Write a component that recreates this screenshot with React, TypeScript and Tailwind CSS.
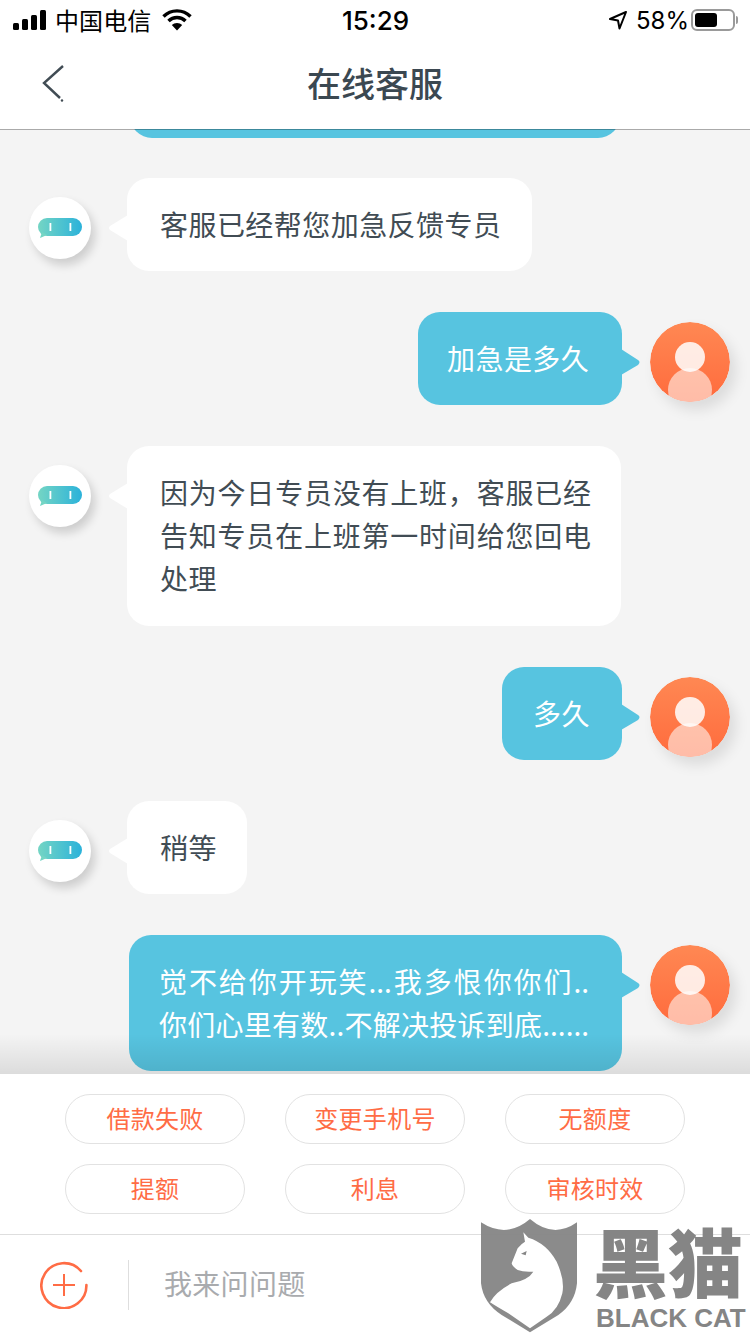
import React from 'react';

const BubbleTail: React.FC<{ side: 'left' | 'right' }> = ({ side }) =>
  side === 'left' ? (
    <svg className="absolute left-[-19px] top-[36px]" width="20" height="28" viewBox="0 0 20 28">
      <path d="M20 1 L2 12 Q0 14 2 16 L20 27 Z" fill="#ffffff" />
    </svg>
  ) : (
    <svg className="absolute right-[-19px] top-[36px]" width="20" height="28" viewBox="0 0 20 28">
      <path d="M0 1 L17 12 Q20 14 17 17 L0 27 Z" fill="#57c4e0" />
    </svg>
  );

const BotAvatar: React.FC = () => (
  <div className="mt-[19px] flex h-[62px] w-[62px] shrink-0 items-center justify-center rounded-full bg-white shadow-[4px_6px_10px_rgba(0,0,0,0.16)]">
    <svg width="44" height="24" viewBox="0 0 44 24">
      <defs>
        <linearGradient id="botGrad" x1="0" y1="0" x2="1" y2="0">
          <stop offset="0" stopColor="#74d5c4" />
          <stop offset="1" stopColor="#2bb2da" />
        </linearGradient>
      </defs>
      <rect x="0" y="2" width="44" height="18" rx="9" fill="url(#botGrad)" />
      <path d="M2 22 L4 16 L9 19 Z" fill="#74d5c4" />
      <rect x="11.5" y="7" width="1.8" height="8" fill="#ffffff" />
      <rect x="31.5" y="7" width="1.8" height="8" fill="#ffffff" />
    </svg>
  </div>
);

const UserAvatar: React.FC = () => (
  <svg className="mt-[10px] shrink-0 rounded-full shadow-[6px_8px_14px_rgba(0,0,0,0.1)]" width="80" height="80" viewBox="0 0 80 80">
    <defs>
      <linearGradient id="userGrad" x1="0" y1="0" x2="0" y2="1">
        <stop offset="0" stopColor="#ff8853" />
        <stop offset="1" stopColor="#ff6b3d" />
      </linearGradient>
      <clipPath id="userClip">
        <circle cx="40" cy="40" r="40" />
      </clipPath>
    </defs>
    <circle cx="40" cy="40" r="40" fill="url(#userGrad)" />
    <g clipPath="url(#userClip)">
      <circle cx="40" cy="35" r="15" fill="#ffffff" fillOpacity="0.85" />
      <ellipse cx="40" cy="68" rx="22" ry="22" fill="#ffffff" fillOpacity="0.55" />
    </g>
  </svg>
);

// long lines in a multi-line bubble are justified to the bubble width, like the app does
const BubbleLines: React.FC<{ lines: string[] }> = ({ lines }) => (
  <>
    {lines.map((l) =>
      lines.length > 1 && l.length >= 10 ? (
        <div key={l} className="text-justify [text-align-last:justify]">
          {l}
        </div>
      ) : (
        <div key={l} className="whitespace-nowrap tracking-[0.45px]">
          {l}
        </div>
      ),
    )}
  </>
);

const BotMessage: React.FC<{ lines: string[]; className: string }> = ({ lines, className }) => (
  <div className="flex items-start gap-[36px] pl-[29px]">
    <BotAvatar />
    <div className={`relative rounded-[22px] bg-white pl-[33px] pr-[30px] pt-[25px] text-[28px] leading-[43px] text-[#414c54] ${className}`}>
      <BubbleTail side="left" />
      <BubbleLines lines={lines} />
    </div>
  </div>
);

const UserMessage: React.FC<{ lines: string[]; className: string }> = ({ lines, className }) => (
  <div className="flex items-start justify-end gap-[28px] pr-[20px]">
    <div className={`relative rounded-[22px] bg-[#57c4e0] py-[25px] text-[28px] leading-[43px] text-white ${className}`}>
      <BubbleTail side="right" />
      <BubbleLines lines={lines} />
    </div>
    <UserAvatar />
  </div>
);

const topics = ['借款失败', '变更手机号', '无额度', '提额', '利息', '审核时效'];

const App: React.FC = () => {
  return (
    <div className="relative flex h-[1334px] w-[750px] flex-col overflow-hidden bg-white font-['Noto_Sans_CJK_SC',sans-serif]">
      {/* Status bar */}
      <div className="flex h-[40px] items-center justify-between pl-[13px] pr-[12px] text-black">
        <div className="flex w-[260px] items-center">
          <svg width="34" height="20" viewBox="0 0 34 20">
            <rect x="0" y="13" width="6" height="7" rx="1.5" fill="#000" />
            <rect x="9" y="9" width="6" height="11" rx="1.5" fill="#000" />
            <rect x="18" y="5" width="6" height="15" rx="1.5" fill="#000" />
            <rect x="27" y="0" width="6" height="20" rx="1.5" fill="#000" />
          </svg>
          <span className="ml-[8px] text-[24px] leading-[30px] tracking-[0.1px]">中国电信</span>
          <svg className="ml-[11px]" width="30" height="22" viewBox="0 0 30 22">
            <path d="M1.5 7.5 A19 19 0 0 1 28.5 7.5" fill="none" stroke="#000" strokeWidth="3.4" />
            <path d="M6.5 12 A12 12 0 0 1 23.5 12" fill="none" stroke="#000" strokeWidth="3.4" />
            <path d="M15 21.5 L9.8 16 A7.5 7.5 0 0 1 20.2 16 Z" fill="#000" />
          </svg>
        </div>
        <span className="pt-[1px] font-['Inter',sans-serif] text-[26px] font-medium leading-[30px]">15:29</span>
        <div className="flex w-[260px] items-center justify-end">
          <svg width="20" height="20" viewBox="0 0 20 20">
            <path d="M18 2 L2 9 L10 10.5 L11.5 18.5 Z" fill="none" stroke="#000" strokeWidth="2" strokeLinejoin="round" />
          </svg>
          <span className="ml-[8px] pt-[2px] font-['Inter',sans-serif] text-[24px] leading-[30px]">58%</span>
          <div className="ml-[2px] flex h-[22px] w-[44px] items-center rounded-[6px] border-2 border-[#9a9a9a] p-[2px]">
            <div className="h-full w-[22px] rounded-[3px] bg-black" />
          </div>
          <div className="ml-[1px] h-[8px] w-[2px] rounded-r-full bg-[#9a9a9a]" />
        </div>
      </div>

      {/* Nav: the border is see-through, the top bubble scrolls under it */}
      <div className="relative z-10 mb-[-1px] flex h-[90px] shrink-0 items-center justify-center border-b border-black/30 bg-white bg-clip-padding pb-[3px]">
        <svg className="absolute left-[40px] top-[22px]" width="28" height="42" viewBox="0 0 28 42">
          <path d="M23 4 L4 21 L20 36" fill="none" stroke="#414c54" strokeWidth="2.4" />
          <circle cx="22" cy="38.5" r="1.2" fill="#414c54" />
        </svg>
        <span className="text-[34px] font-medium leading-[46px] text-[#3b4851]">在线客服</span>
      </div>

      {/* Messages */}
      <div className="relative h-[945px] shrink-0 overflow-hidden bg-[#f4f4f4]">
        <div className="ml-[130px] h-[9px] w-[490px] overflow-hidden">
          <div className="mt-[-35px] h-[44px] rounded-[22px] bg-[#57c4e0]" />
        </div>
        <div className="mt-[40px] flex flex-col gap-[41px]">
          <BotMessage lines={['客服已经帮您加急反馈专员']} className="w-[405px] pb-[25px]" />
          <UserMessage lines={['加急是多久']} className="w-[204px] px-[29px]" />
          <BotMessage
            lines={['因为今日专员没有上班，客服已经', '告知专员在上班第一时间给您回电', '处理']}
            className="w-[494px] pb-[26px]"
          />
          <UserMessage lines={['多久']} className="w-[120px] px-[31px]" />
          <BotMessage lines={['稍等']} className="w-[120px] pb-[25px]" />
          <UserMessage
            lines={['觉不给你开玩笑...我多恨你你们..', '你们心里有数..不解决投诉到底......']}
            className="w-[493px] pl-[30px] pr-[33px]"
          />
        </div>
        <div className="absolute inset-x-0 bottom-0 h-[40px] bg-gradient-to-b from-transparent to-black/10" />
      </div>

      {/* Quick topics */}
      <div className="grid h-[161px] shrink-0 grid-cols-[180px_180px_180px] content-start justify-center gap-x-[40px] gap-y-[20px] border-b border-[#dedede] bg-white pt-[20px]">
        {topics.map((t) => (
          <div
            key={t}
            className="flex h-[50px] items-center justify-center rounded-full border border-[#e2e2e2] pb-[2px] text-[24px] tracking-[0.3px] text-[#ff6c45]"
          >
            {t}
          </div>
        ))}
      </div>

      {/* Input */}
      <div className="flex flex-1 items-center bg-white">
        <svg className="ml-[40px]" width="48" height="48" viewBox="0 0 48 48">
          <path d="M41 10 A22.5 22.5 0 1 0 46.4 24" fill="none" stroke="#ff6c45" strokeWidth="2.6" strokeLinecap="round" />
          <path d="M24 13 V35 M13 24 H35" fill="none" stroke="#ff6c45" strokeWidth="2" />
        </svg>
        <div className="ml-[40px] h-[50px] w-px bg-[#dedede]" />
        <span className="ml-[35px] pb-[4px] text-[28px] tracking-[0.3px] text-[#a9abae]">我来问问题</span>
      </div>

      {/* Watermark */}
      <div className="pointer-events-none absolute bottom-0 right-0 h-[134px] w-[310px]">
        <svg className="absolute left-[35px] top-[15px]" width="110" height="119" viewBox="0 0 330 357">
          <path
            d="M18 22 Q95 72 165 12 Q235 72 306 22 L306 205 Q300 265 250 300 L165 352 L80 300 Q25 265 18 205 Z"
            fill="#858585"
            fillOpacity="0.95"
          />
          <path
            d="M145 52 L160 68 Q215 85 245 140 Q270 195 262 235 Q250 285 215 305 L165 340 L100 295 Q65 275 45 262 Q62 230 110 205 Q160 195 175 170 Q145 172 128 165 Q112 155 110 145 Q118 125 128 100 Q140 85 150 80 Z"
            fill="#ffffff"
          />
          <path d="M138 116 L155 108 L152 121 Z" fill="#858585" />
        </svg>
        <div className="absolute left-[153px] top-[24px] text-[75px] font-black leading-[72px] text-[#858585]">
          黑猫
        </div>
        <div className="absolute left-[156px] top-[105px] font-['Liberation_Sans',sans-serif] text-[26px] font-bold leading-[26px] whitespace-nowrap text-[#858585]">
          BLACK CAT
        </div>
      </div>
    </div>
  );
};

export default App;
